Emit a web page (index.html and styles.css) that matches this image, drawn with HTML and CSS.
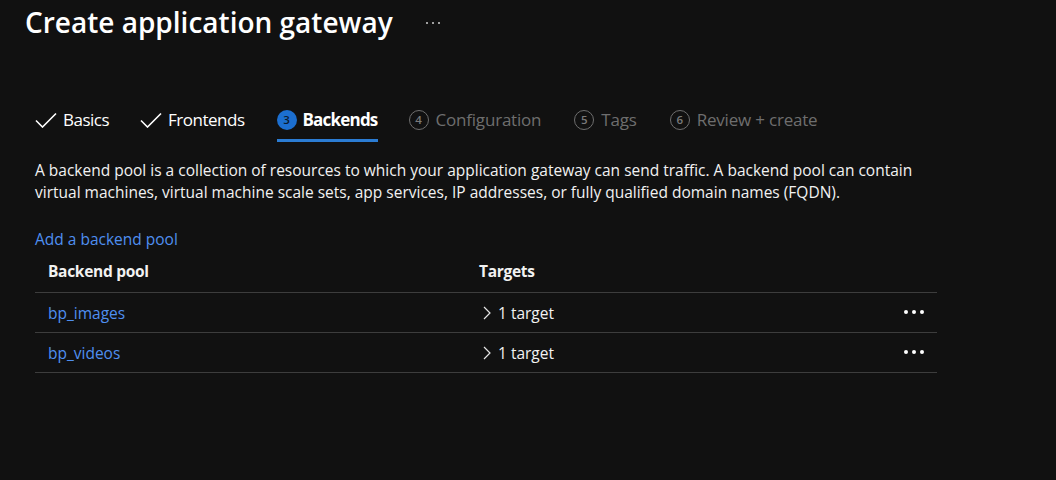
FILE: index.html
```html
<!DOCTYPE html>
<html lang="en">
<head>
<meta charset="utf-8">
<title>Create application gateway</title>
<link rel="stylesheet" href="styles.css">
</head>
<body>
<header class="header">
  <h1 class="title">Create application gateway</h1>
  <span class="more" aria-label="More"><i></i><i></i><i></i></span>
</header>

<nav class="tabs">
  <div class="tab done">
    <svg class="check" viewBox="0 0 22 16" width="22" height="16"><path d="M1 8.5 L7.5 15 L21 1.5" fill="none" stroke="#fff" stroke-width="1.6"/></svg>
    <span class="tab-label">Basics</span>
  </div>
  <div class="tab done">
    <svg class="check" viewBox="0 0 22 16" width="22" height="16"><path d="M1 8.5 L7.5 15 L21 1.5" fill="none" stroke="#fff" stroke-width="1.6"/></svg>
    <span class="tab-label">Frontends</span>
  </div>
  <div class="tab active">
    <span class="step">3</span>
    <span class="tab-label">Backends</span>
  </div>
  <div class="tab todo">
    <span class="step">4</span>
    <span class="tab-label">Configuration</span>
  </div>
  <div class="tab todo">
    <span class="step">5</span>
    <span class="tab-label">Tags</span>
  </div>
  <div class="tab todo">
    <span class="step">6</span>
    <span class="tab-label">Review + create</span>
  </div>
</nav>

<main class="content">
  <p class="desc">A backend pool is a collection of resources to which your application gateway can send traffic. A backend pool can contain virtual machines, virtual machine scale sets, app services, IP addresses, or fully qualified domain names (FQDN).</p>
  <a class="link add-link" href="#">Add a backend pool</a>

  <div class="table">
    <div class="row head">
      <div class="cell">Backend pool</div>
      <div class="cell">Targets</div>
      <div class="cell"></div>
    </div>
    <div class="row">
      <div class="cell"><a class="link" href="#">bp_images</a></div>
      <div class="cell targets"><svg class="chev" viewBox="0 0 8 14" width="8" height="14"><path d="M1 1 L7 7 L1 13" fill="none" stroke="#e6e6e6" stroke-width="1.2"/></svg>1 target</div>
      <div class="cell actions"><span class="dots"><i></i><i></i><i></i></span></div>
    </div>
    <div class="row">
      <div class="cell"><a class="link" href="#">bp_videos</a></div>
      <div class="cell targets"><svg class="chev" viewBox="0 0 8 14" width="8" height="14"><path d="M1 1 L7 7 L1 13" fill="none" stroke="#e6e6e6" stroke-width="1.2"/></svg>1 target</div>
      <div class="cell actions"><span class="dots"><i></i><i></i><i></i></span></div>
    </div>
  </div>
</main>
</body>
</html>
```

FILE: styles.css
```css
* { box-sizing: border-box; }

html, body {
  margin: 0;
  padding: 0;
  background: #111111;
  color: #ffffff;
  font-family: "Open Sans", "Noto Sans", "Liberation Sans", sans-serif;
}

.header {
  display: flex;
  align-items: center;
  height: 44px;
  padding: 0 0 0 25px;
}

.title {
  margin: 0;
  font-size: 28px;
  font-weight: 600;
  line-height: 40px;
  letter-spacing: 0;
  color: #ffffff;
}

.more {
  display: flex;
  gap: 4px;
  margin-left: 33px;
  margin-top: 2px;
}
.more i {
  width: 2px;
  height: 2px;
  background: #cfcfcf;
  border-radius: 50%;
}

.tabs {
  display: flex;
  gap: 31px;
  margin-top: 55px;
  padding-left: 35px;
}

.tab {
  display: flex;
  align-items: center;
  gap: 6px;
  height: 43px;
  padding-top: 1px;
  border-bottom: 3px solid transparent;
  font-size: 17px;
  letter-spacing: -0.5px;
}

.tab.done .tab-label { color: #ffffff; }
.tab.active { margin-left: 1px; border-bottom-color: #2b7cd3; }
.tab.active .tab-label { font-weight: 700; color: #ffffff; letter-spacing: -0.8px; }
.tab.todo { gap: 7px; letter-spacing: -0.2px; }
.tab.todo + .tab.todo { margin-left: 2px; }
.tab.todo .tab-label { color: #6e6e6e; }

.step {
  display: inline-flex;
  align-items: center;
  justify-content: center;
  width: 20px;
  height: 20px;
  border-radius: 50%;
  font-size: 11.5px;
  font-weight: 600;
  letter-spacing: 0;
}
.tab.active .step {
  background: #1c6fd0;
  color: #0b1a2e;
}
.tab.todo .step {
  border: 1.5px solid #6e6e6e;
  color: #7a7a7a;
}

.check { flex: none; }

.content {
  padding: 0 0 0 35px;
}

.desc {
  margin: 17px 0 0;
  max-width: 900px;
  font-size: 15.5px;
  line-height: 22px;
  letter-spacing: 0;
  color: #f2f2f2;
}

.link {
  color: #4f8ff0;
  text-decoration: none;
}

.add-link {
  display: block;
  margin-top: 25px;
  font-size: 15.5px;
  line-height: 22px;
}

.table {
  width: 902px;
}

.row {
  display: grid;
  grid-template-columns: 444px 1fr auto;
  align-items: center;
  height: 40px;
  border-bottom: 1px solid #3d3d3d;
  font-size: 15.5px;
}
.row.head {
  height: 43px;
  font-weight: 700;
  color: #f2f2f2;
  letter-spacing: -0.3px;
}
.row .cell:first-child { padding-left: 13px; }

.targets {
  display: flex;
  align-items: center;
  gap: 7px;
  padding-left: 4px;
  color: #f2f2f2;
}

.actions {
  padding-right: 13px;
}
.dots {
  display: flex;
  gap: 4px;
  margin-top: -2px;
}
.dots i {
  width: 4px;
  height: 4px;
  border-radius: 50%;
  background: #ffffff;
}
```
